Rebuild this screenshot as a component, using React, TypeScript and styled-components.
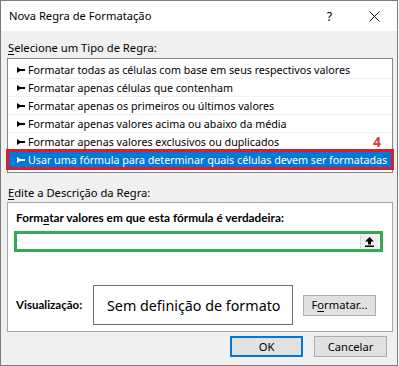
import React from 'react';
import styled, { createGlobalStyle } from 'styled-components';

const Global = createGlobalStyle`
  html, body { margin: 0; padding: 0; background: #ffffff; }
  body { font-family: "Noto Sans", sans-serif; }
  * { box-sizing: border-box; }
`;

const Dialog = styled.div`
  width: 398px;
  height: 366px;
  border: 1px solid #7a7a7a;
  background: #f0f0f0;
  display: flex;
  flex-direction: column;
  font-family: "Noto Sans", sans-serif;
  font-size: 11.2px;
  color: #000;
`;

const TitleBar = styled.div`
  height: 30px;
  background: #ffffff;
  display: flex;
  align-items: center;
  flex: none;
`;

const Title = styled.div`
  flex: 1;
  padding-left: 8px;
  font-size: 11.2px;
  line-height: 16px;
`;

const TitleButton = styled.div`
  width: 45px;
  height: 30px;
  display: flex;
  align-items: center;
  justify-content: center;
  font-size: 12.5px;
`;

const Body = styled.div`
  display: flex;
  flex-direction: column;
  padding: 0 4px 0 6px;
  flex: 1;
`;

const SectionLabel = styled.div<{ $top: number; $bottom: number }>`
  margin-top: ${(p) => p.$top}px;
  margin-bottom: ${(p) => p.$bottom}px;
  line-height: 16px;
  height: 16px;
  padding-left: 1px;
`;

const Key = styled.span`
  text-decoration: underline;
  text-underline-offset: 2px;
`;

const ListBox = styled.div`
  position: relative;
  height: 115px;
  border: 1px solid #828790;
  background: #ffffff;
  padding-top: 2px;
  display: flex;
  flex-direction: column;
`;

const ListRow = styled.div<{ $selected?: boolean }>`
  position: relative;
  height: 18px;
  display: flex;
  align-items: center;
  gap: 3px;
  padding-left: 9px;
  font-size: 10.7px;
  white-space: nowrap;
  border-bottom: 1px solid ${(p) => (p.$selected ? '#0078d7' : '#efefef')};
  background: ${(p) => (p.$selected ? '#0078d7' : 'transparent')};
  color: ${(p) => (p.$selected ? '#ffffff' : '#000000')};
  ${(p) =>
    p.$selected &&
    `
    &::after {
      content: '';
      position: absolute;
      top: -2px;
      bottom: -2px;
      left: -2px;
      right: -2px;
      border: 3px solid #d71f2e;
    }
  `}
`;

const Marker = styled.svg`
  width: 8px;
  height: 6px;
  flex: none;
`;

const StepNumber = styled.span`
  position: absolute;
  top: 76px;
  right: 11px;
  font-size: 14px;
  line-height: 14px;
  font-weight: 700;
  color: #e0383c;
`;

const Group = styled.div`
  height: 130px;
  border: 1px solid #a8a8a8;
  background: #ffffff;
  padding: 7px 0 0 0;
  display: flex;
  flex-direction: column;
`;

const BoldLabel = styled.div`
  font-family: Lato, "Noto Sans", sans-serif;
  font-weight: 700;
  font-size: 11.8px;
  line-height: 16px;
  height: 16px;
  padding-left: 8px;
  white-space: nowrap;
`;

const FormulaBox = styled.div`
  margin: 5px 0 0 6px;
  width: 369px;
  height: 21px;
  border: 3px solid #35a852;
  background: #ffffff;
  display: flex;
  justify-content: flex-end;
`;

const PickButton = styled.div`
  width: 18px;
  height: 15px;
  margin-right: 2px;
  background: #f0f0f0;
  border-left: 1px solid #d9d9d9;
  display: flex;
  align-items: center;
  justify-content: center;
`;

const PreviewRow = styled.div`
  margin-top: 33px;
  display: flex;
  align-items: center;
  padding-left: 8px;
`;

const PreviewLabel = styled.div`
  width: 77px;
  font-family: Lato, "Noto Sans", sans-serif;
  font-weight: 700;
  font-size: 11.5px;
  line-height: 16px;
`;

const PreviewBox = styled.div`
  width: 200px;
  height: 40px;
  border: 1px solid #6e6e6e;
  display: flex;
  align-items: center;
  padding-left: 13px;
  font-size: 14.3px;
  white-space: nowrap;
`;

const Button = styled.div<{ $default?: boolean; $width?: number }>`
  width: ${(p) => p.$width ?? 73}px;
  height: 21px;
  background: #e1e1e1;
  border: ${(p) => (p.$default ? '2px solid #0078d7' : '1px solid #adadad')};
  display: flex;
  align-items: center;
  justify-content: center;
  font-size: 11.2px;
  line-height: 16px;
`;

const FormatButton = styled(Button)`
  margin-left: 10px;
`;

const Footer = styled.div`
  margin-top: 4px;
  margin-right: 6px;
  display: flex;
  justify-content: flex-end;
  gap: 11px;
`;

const rules = [
  'Formatar todas as células com base em seus respectivos valores',
  'Formatar apenas células que contenham',
  'Formatar apenas os primeiros ou últimos valores',
  'Formatar apenas valores acima ou abaixo da média',
  'Formatar apenas valores exclusivos ou duplicados',
  'Usar uma fórmula para determinar quais células devem ser formatadas',
];

const ArrowMark = ({ color }: { color: string }) => (
  <Marker viewBox="0 0 8 6">
    <polygon points="0,0 3,2 8,2 8,4 3,4 0,6" fill={color} />
  </Marker>
);

export default function App() {
  return (
    <>
      <Global />
      <Dialog>
        <TitleBar>
          <Title>Nova Regra de Formatação</Title>
          <TitleButton>?</TitleButton>
          <TitleButton>
            <svg width="11" height="11" viewBox="0 0 11 11">
              <path d="M0.5 0.5 L10.5 10.5 M10.5 0.5 L0.5 10.5" stroke="#111" strokeWidth="1" />
            </svg>
          </TitleButton>
        </TitleBar>
        <Body>
          <SectionLabel $top={9} $bottom={2}>
            <Key>S</Key>elecione um Tipo de Regra:
          </SectionLabel>
          <ListBox>
            {rules.map((r, i) => {
              const sel = i === rules.length - 1;
              return (
                <ListRow key={r} $selected={sel}>
                  <ArrowMark color={sel ? '#ffffff' : '#000000'} />
                  <span>{r}</span>
                </ListRow>
              );
            })}
            <StepNumber>4</StepNumber>
          </ListBox>
          <SectionLabel $top={12} $bottom={1}>
            <Key>E</Key>dite a Descrição da Regra:
          </SectionLabel>
          <Group>
            <BoldLabel>
              Form<Key>a</Key>tar valores em que esta fórmula é verdadeira:
            </BoldLabel>
            <FormulaBox>
              <PickButton>
                <svg width="9" height="10" viewBox="0 0 9 10">
                  <polygon points="4.5,0 9,4.5 6,4.5 6,7.5 3,7.5 3,4.5 0,4.5" fill="#000" />
                  <rect x="0" y="8.5" width="9" height="1.5" fill="#000" />
                </svg>
              </PickButton>
            </FormulaBox>
            <PreviewRow>
              <PreviewLabel>Visualização:</PreviewLabel>
              <PreviewBox>Sem definição de formato</PreviewBox>
              <FormatButton>
                F<Key>o</Key>rmatar...
              </FormatButton>
            </PreviewRow>
          </Group>
          <Footer>
            <Button $default>OK</Button>
            <Button>Cancelar</Button>
          </Footer>
        </Body>
      </Dialog>
    </>
  );
}
